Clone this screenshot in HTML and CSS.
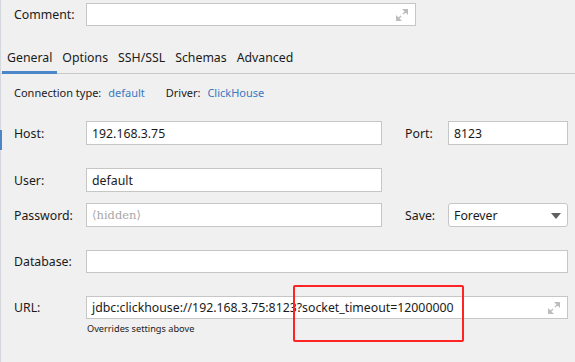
FILE: index.html
```html
<!DOCTYPE html>
<html lang="en">
<head>
    <meta charset="UTF-8">
    <title>Connection settings</title>
    <link rel="stylesheet" href="styles.css">
</head>
<body>
<div class="panel">

    <!-- Comment -->
    <div class="row comment-row">
        <label class="label">Comment:</label>
        <div class="field comment-field">
            <svg class="expand" width="12" height="12" viewBox="0 0 12 12">
                <path d="M12 0 L12 5 L7 0 Z M10 2 L7 5" fill="#bdbdbd" stroke="#bdbdbd" stroke-width="1.4"/>
                <path d="M0 12 L0 7 L5 12 Z M2 10 L5 7" fill="#bdbdbd" stroke="#bdbdbd" stroke-width="1.4"/>
            </svg>
        </div>
    </div>

    <!-- Tabs -->
    <div class="tabs">
        <span class="tab active">General</span>
        <span class="tab">Options</span>
        <span class="tab">SSH/SSL</span>
        <span class="tab">Schemas</span>
        <span class="tab">Advanced</span>
    </div>

    <div class="info">
        <span>Connection type:</span><span class="link">default</span>
        <span class="driver">Driver:</span><span class="link">ClickHouse</span>
    </div>

    <div class="focus-mark"></div>

    <!-- Main form -->
    <div class="row host-row">
        <label class="label">Host:</label>
        <div class="field short">192.168.3.75</div>
        <label class="label side">Port:</label>
        <div class="field side-field">8123</div>
    </div>

    <div class="row user-row">
        <label class="label">User:</label>
        <div class="field short">default</div>
    </div>

    <div class="row pass-row">
        <label class="label">Password:</label>
        <div class="field short"><span class="hidden">&#x27E8;hidden&#x27E9;</span></div>
        <label class="label side">Save:</label>
        <div class="field side-field select">
            Forever
            <svg class="arrow" width="10" height="6" viewBox="0 0 10 6"><path d="M0 0 L10 0 L5 6 Z" fill="#606060"/></svg>
        </div>
    </div>

    <div class="row db-row">
        <label class="label">Database:</label>
        <div class="field wide"></div>
    </div>

    <div class="row url-row">
        <label class="label">URL:</label>
        <div class="field wide">
            jdbc:clickhouse://192.168.3.75:8123?socket_timeout=12000000
            <svg class="expand" width="12" height="12" viewBox="0 0 12 12">
                <path d="M12 0 L12 5 L7 0 Z M10 2 L7 5" fill="#bdbdbd" stroke="#bdbdbd" stroke-width="1.4"/>
                <path d="M0 12 L0 7 L5 12 Z M2 10 L5 7" fill="#bdbdbd" stroke="#bdbdbd" stroke-width="1.4"/>
            </svg>
        </div>
    </div>
    <div class="hint">Overrides settings above</div>

    <!-- Highlight box -->
    <div class="highlight"></div>
</div>
</body>
</html>
```

FILE: styles.css
```css
/* General */
body {
    margin: 0;
    background: #f0f0f0;
    font-family: "Noto Sans", Arial, sans-serif;
    font-size: 12.3px;
    color: #1a1a1a;
}

.panel {
    position: relative;
    height: 362px;
    border-left: 1px solid #d4d7dc;
    box-sizing: border-box;
}

/* Rows */
.row {
    display: flex;
    align-items: center;
    padding-left: 13px;
}

.label {
    width: 72px;
    flex-shrink: 0;
}

.label.side {
    width: 43px;
    margin-left: 23px;
}

.field {
    position: relative;
    height: 24px;
    box-sizing: border-box;
    background: #fff;
    border: 1px solid #c6c6c6;
    display: flex;
    align-items: center;
    padding-left: 5px;
    white-space: nowrap;
}

.comment-row { padding-top: 3px; }
.comment-field { width: 330px; height: 23px; }

.short { width: 296px; }
.side-field { width: 120px; }
.wide { width: 482px; height: 23px; }

.expand {
    position: absolute;
    right: 7px;
    top: 5px;
}

.select {
    border-radius: 3px;
}

.select .arrow {
    position: absolute;
    right: 6px;
    top: 9px;
}

.hidden {
    font-family: "DejaVu Serif", "Liberation Serif", serif;
    color: #a8a8a8;
    font-size: 11.5px;
}

/* Tabs */
.tabs {
    display: flex;
    margin-top: 16px;
    padding-left: 1px;
    border-bottom: 1px solid #c9c9c9;
    height: 31px;
}

.tab {
    padding: 7px 5px 0;
    height: 24px;
    box-sizing: content-box;
}

.tab.active {
    border-bottom: 3px solid #4a86c8;
    margin-bottom: -1px;
    height: 22px;
}

/* Connection info */
.info {
    padding: 11px 0 0 13px;
    height: 21px;
    font-size: 11px;
}

.info .link {
    color: #3a78c0;
    margin-left: 7px;
}

.info .driver {
    margin-left: 18px;
}

.focus-mark {
    position: absolute;
    left: -1px;
    top: 130px;
    width: 2px;
    height: 20px;
    background: #4a86c8;
}

.host-row { margin-top: 15px; }
.user-row { margin-top: 23px; }
.pass-row { margin-top: 11px; }
.db-row { margin-top: 23px; }
.url-row { margin-top: 23px; }

.hint {
    padding-left: 86px;
    font-size: 9.2px;
    margin-top: 3px;
}

/* Red highlight */
.highlight {
    position: absolute;
    left: 292px;
    top: 285px;
    width: 171px;
    height: 57px;
    box-sizing: border-box;
    border: 2px solid #ff2323;
    border-radius: 2px;
}
```
